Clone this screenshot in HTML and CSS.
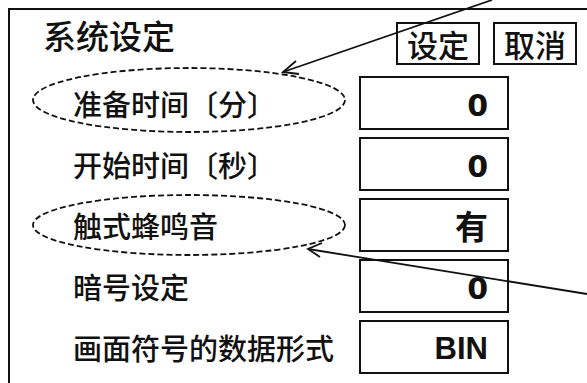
FILE: index.html
```html
<!doctype html>
<html>
  <head>
    <meta charset="utf-8">
    <title>系统设定</title>
    <link rel="stylesheet" href="styles.css">
  </head>
  <body>

    <div class="panel">
      <div class="head">
        <h1 class="title">系统设定</h1>
        <div class="buttons">
          <button class="btn">设定</button>
          <button class="btn">取消</button>
        </div>
      </div>

      <div class="rows">
        <div class="row"><span class="label">准备时间〔分〕</span><span class="value value-num">0</span></div>
        <div class="row"><span class="label">开始时间〔秒〕</span><span class="value value-num">0</span></div>
        <div class="row"><span class="label">触式蜂鸣音</span><span class="value value-cjk">有</span></div>
        <div class="row"><span class="label">暗号设定</span><span class="value value-num">0</span></div>
        <div class="row"><span class="label">画面符号的数据形式</span><span class="value">BIN</span></div>
      </div>
    </div>

    <!-- callout marks drawn over the panel -->
    <svg class="notes" width="587" height="383" viewBox="0 0 587 383">
      <g fill="none" stroke="#111" stroke-width="1.8">
        <ellipse cx="189" cy="100" rx="156" ry="32" stroke-dasharray="6 3"/>
        <ellipse cx="189" cy="225" rx="156" ry="30" stroke-dasharray="6 3"/>
        <line x1="283" y1="72" x2="492" y2="0"/>
        <polyline points="296,61 283,72 299,74"/>
        <line x1="308" y1="249" x2="587" y2="294"/>
        <polyline points="322,243 308,249 320,257"/>
      </g>
    </svg>

  </body>
</html>
```

FILE: styles.css
```css
* { margin: 0; padding: 0; box-sizing: border-box; }
html, body { height: 100%; }
body { font-family: "Noto Sans CJK SC", sans-serif; color: #111; background: #fff; overflow: hidden; }

.panel { margin: 8px 0 0 8px; height: calc(100% - 8px); border-top: 2px solid #111; border-left: 2px solid #111; }

.head { display: flex; justify-content: space-between; align-items: flex-start; padding: 0 10px 0 33px; }
.title { font-size: 33px; font-weight: 500; line-height: 40px; margin-top: 5px; }
.buttons { display: flex; gap: 13px; margin-top: 12px; }
.btn { width: 84px; height: 43px; border: 2px solid #111; background: #fff; color: #111;
  font: 500 31px "Noto Sans CJK SC", sans-serif; line-height: 1;
  display: flex; align-items: center; justify-content: center; }

.rows { display: flex; flex-direction: column; gap: 7px; padding-left: 63px; margin-top: 11px; }
.row { display: flex; align-items: center; height: 54px; }
.label { width: 286px; font-size: 29px; font-weight: 500; }
.value { width: 150px; height: 54px; border: 2px solid #111; display: flex; align-items: center; justify-content: flex-end;
  padding: 4px 19px 0 0; font: bold 31px "Liberation Sans", "Noto Sans CJK SC", sans-serif; }
.value-num { font-family: "DejaVu Sans", sans-serif; font-size: 30px; }
.value-cjk { font-size: 33px; padding-top: 0; }

.notes { position: absolute; top: 0; left: 0; pointer-events: none; }
```
